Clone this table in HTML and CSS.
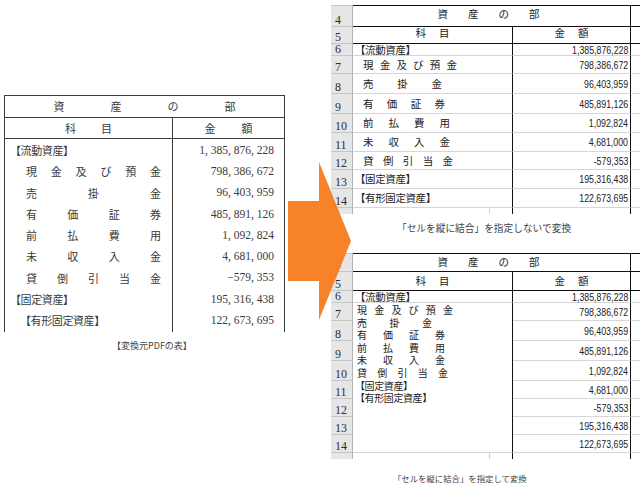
FILE: index.html
```html
<!DOCTYPE html>
<html lang="ja">
<head>
<meta charset="utf-8">
<title>セルを縦に結合</title>
<link rel="stylesheet" href="styles.css">
</head>
<body>
<main class="page">
  <section class="pdf">
    <div class="pdf-table">
      <div class="pdf-title"><span>資</span><span>産</span><span>の</span><span>部</span></div>
      <div class="pdf-head">
        <div class="pdf-hl"><span>科</span><span>目</span></div>
        <div class="pdf-hr"><span>金</span><span>額</span></div>
      </div>
      <div class="pdf-body">
        <div class="pdf-labels">
          <div class="pdf-l"><span class="br">【流動資産】</span></div>
          <div class="pdf-l pdf-l-sp"><span class="spread"><span>現</span><span>金</span><span>及</span><span>び</span><span>預</span><span>金</span></span></div>
          <div class="pdf-l pdf-l-sp"><span class="spread"><span>売</span><span>掛</span><span>金</span></span></div>
          <div class="pdf-l pdf-l-sp"><span class="spread"><span>有</span><span>価</span><span>証</span><span>券</span></span></div>
          <div class="pdf-l pdf-l-sp"><span class="spread"><span>前</span><span>払</span><span>費</span><span>用</span></span></div>
          <div class="pdf-l pdf-l-sp"><span class="spread"><span>未</span><span>収</span><span>入</span><span>金</span></span></div>
          <div class="pdf-l pdf-l-sp"><span class="spread"><span>貸</span><span>倒</span><span>引</span><span>当</span><span>金</span></span></div>
          <div class="pdf-l"><span class="br">【固定資産】</span></div>
          <div class="pdf-l pdf-l-sub"><span class="br">【有形固定資産】</span></div>
        </div>
        <div class="pdf-amounts">
          <div class="pdf-r">1, 385, 876, 228</div>
          <div class="pdf-r">798, 386, 672</div>
          <div class="pdf-r">96, 403, 959</div>
          <div class="pdf-r">485, 891, 126</div>
          <div class="pdf-r">1, 092, 824</div>
          <div class="pdf-r">4, 681, 000</div>
          <div class="pdf-r">−579, 353</div>
          <div class="pdf-r">195, 316, 438</div>
          <div class="pdf-r">122, 673, 695</div>
        </div>
      </div>
    </div>
    <p class="pdf-caption">【変換元PDFの表】</p>
  </section>

  <section class="shots">
    <div class="sheet sheet-split">
      <div class="rh rh-first">4</div>
      <div class="c-title c-up4"><span>資</span><span>産</span><span>の</span><span>部</span></div>
      <div class="c-pad c-pad-top"></div>

      <div class="rh">5</div>
      <div class="c-head c-up3"><span>科</span><span>目</span></div>
      <div class="c-head c-head-r c-up3"><span>金</span><span>額</span></div>
      <div class="c-pad c-pad-head"></div>

      <div class="rh">6</div>
      <div class="c-label"><span class="br">【流動資産】</span></div>
      <div class="c-num"><span class="n">1,385,876,228</span></div>
      <div class="c-pad"></div>

      <div class="rh">7</div>
      <div class="c-label c-label-sp"><span class="spread w94"><span>現</span><span>金</span><span>及</span><span>び</span><span>預</span><span>金</span></span></div>
      <div class="c-num"><span class="n">798,386,672</span></div>
      <div class="c-pad"></div>

      <div class="rh">8</div>
      <div class="c-label c-label-sp"><span class="spread w79"><span>売</span><span>掛</span><span>金</span></span></div>
      <div class="c-num"><span class="n">96,403,959</span></div>
      <div class="c-pad"></div>

      <div class="rh">9</div>
      <div class="c-label c-label-sp"><span class="spread w82"><span>有</span><span>価</span><span>証</span><span>券</span></span></div>
      <div class="c-num"><span class="n">485,891,126</span></div>
      <div class="c-pad"></div>

      <div class="rh">10</div>
      <div class="c-label c-label-sp"><span class="spread w87"><span>前</span><span>払</span><span>費</span><span>用</span></span></div>
      <div class="c-num"><span class="n">1,092,824</span></div>
      <div class="c-pad"></div>

      <div class="rh">11</div>
      <div class="c-label c-label-sp"><span class="spread w87"><span>未</span><span>収</span><span>入</span><span>金</span></span></div>
      <div class="c-num"><span class="n">4,681,000</span></div>
      <div class="c-pad"></div>

      <div class="rh">12</div>
      <div class="c-label c-label-sp"><span class="spread w90"><span>貸</span><span>倒</span><span>引</span><span>当</span><span>金</span></span></div>
      <div class="c-num"><span class="n">-579,353</span></div>
      <div class="c-pad"></div>

      <div class="rh">13</div>
      <div class="c-label"><span class="br">【固定資産】</span></div>
      <div class="c-num"><span class="n">195,316,438</span></div>
      <div class="c-pad"></div>

      <div class="rh">14</div>
      <div class="c-label"><span class="br">【有形固定資産】</span></div>
      <div class="c-num"><span class="n">122,673,695</span></div>
      <div class="c-pad"></div>

      <div class="rh rh-tail"></div>
      <div class="c-tail"><span class="tick"></span></div>
      <div class="c-tail-num"></div>
      <div class="c-pad c-pad-tail"></div>
    </div>
    <p class="cap cap-a">「セルを縦に結合」を指定しないで変換</p>

    <div class="sheet sheet-merged">
      <div class="rh rh-first">4</div>
      <div class="c-title"><span>資</span><span>産</span><span>の</span><span>部</span></div>
      <div class="c-pad c-pad-top"></div>

      <div class="rh">5</div>
      <div class="c-head"><span>科</span><span>目</span></div>
      <div class="c-head c-head-r"><span>金</span><span>額</span></div>
      <div class="c-pad c-pad-head"></div>

      <div class="rh">6</div>
      <div class="c-label"><span class="br">【流動資産】</span></div>
      <div class="c-num"><span class="n">1,385,876,228</span></div>
      <div class="c-pad"></div>

      <div class="rh">7</div>
      <div class="c-merged">
        <span class="mline spread w96"><span>現</span><span>金</span><span>及</span><span>び</span><span>預</span><span>金</span></span>
        <span class="mline spread w75"><span>売</span><span>掛</span><span>金</span></span>
        <span class="mline spread w88"><span>有</span><span>価</span><span>証</span><span>券</span></span>
        <span class="mline spread w88"><span>前</span><span>払</span><span>費</span><span>用</span></span>
        <span class="mline spread w88"><span>未</span><span>収</span><span>入</span><span>金</span></span>
        <span class="mline spread w91"><span>貸</span><span>倒</span><span>引</span><span>当</span><span>金</span></span>
        <span class="mline br">【固定資産】</span>
        <span class="mline br">【有形固定資産】</span>
      </div>
      <div class="c-num"><span class="n">798,386,672</span></div>
      <div class="c-pad"></div>

      <div class="rh">8</div>
      <div class="c-num"><span class="n">96,403,959</span></div>
      <div class="c-pad"></div>

      <div class="rh">9</div>
      <div class="c-num"><span class="n">485,891,126</span></div>
      <div class="c-pad"></div>

      <div class="rh">10</div>
      <div class="c-num"><span class="n">1,092,824</span></div>
      <div class="c-pad"></div>

      <div class="rh">11</div>
      <div class="c-num"><span class="n">4,681,000</span></div>
      <div class="c-pad"></div>

      <div class="rh">12</div>
      <div class="c-num"><span class="n">-579,353</span></div>
      <div class="c-pad"></div>

      <div class="rh">13</div>
      <div class="c-num"><span class="n">195,316,438</span></div>
      <div class="c-pad"></div>

      <div class="rh">14</div>
      <div class="c-num"><span class="n">122,673,695</span></div>
      <div class="c-pad"></div>

      <div class="rh rh-tail"></div>
      <div class="c-tail"><span class="tick"></span></div>
      <div class="c-tail-num"></div>
      <div class="c-pad c-pad-tail"></div>
    </div>
    <p class="cap cap-b">「セルを縦に結合」を指定して変換</p>
  </section>

  <svg class="arrow" width="64" height="159" viewBox="0 0 64 159" aria-hidden="true">
    <polygon points="0,39 31,39 31,0 63,79 31,158 31,119 0,119" fill="#f8822a"/>
  </svg>
</main>
</body>
</html>
```

FILE: styles.css
```css
* {
  box-sizing: border-box;
  margin: 0;
  padding: 0;
}

html,
body {
  background: #ffffff;
}

body {
  width: 640px;
  height: 492px;
  overflow: hidden;
  font-family: "Noto Sans CJK JP", "Noto Sans", sans-serif;
  color: #222;
}

.page {
  position: relative;
  display: flex;
  width: 640px;
  height: 492px;
}

/* ---------- left: source PDF table ---------- */
.pdf {
  width: 331px;
  flex: none;
  padding: 95px 0 0 4px;
}

.pdf-table {
  width: 281px;
  border: 1px solid #3c3c3c;
  border-bottom: 0;
  color: #3a3a3a;
  font-size: 11px;
}

.pdf-title {
  height: 22px;
  border-bottom: 1px solid #3c3c3c;
  display: flex;
  justify-content: center;
  align-items: center;
  gap: 46px;
  line-height: 1;
}

.pdf-head {
  height: 21px;
  border-bottom: 1px solid #3c3c3c;
  display: flex;
  line-height: 1;
}

.pdf-hl {
  width: 167px;
  display: flex;
  justify-content: center;
  align-items: center;
  gap: 25px;
}

.pdf-hr {
  flex: 1;
  border-left: 1px solid #3c3c3c;
  display: flex;
  justify-content: center;
  align-items: center;
  gap: 26px;
}

.pdf-body {
  display: flex;
  height: 193px;
}

.pdf-labels {
  width: 167px;
  padding-top: 1px;
}

.pdf-amounts {
  flex: 1;
  border-left: 1px solid #3c3c3c;
  padding-top: 1px;
}

.pdf-l {
  height: 21.25px;
  display: flex;
  align-items: center;
  padding-left: 5px;
  line-height: 1;
}

.pdf-l-sp {
  padding-left: 21px;
}

.pdf-l-sp .spread {
  width: 135px;
}

.pdf-l-sub {
  padding-left: 15px;
}

.pdf-r {
  height: 21.25px;
  display: flex;
  align-items: center;
  justify-content: flex-end;
  padding-right: 10px;
  font-family: "Liberation Serif", serif;
  font-size: 11.5px;
  color: #3a3a3a;
  line-height: 1;
}

.pdf-caption {
  margin-top: 9px;
  padding-left: 108px;
  font-size: 9px;
  line-height: 10px;
  color: #444;
  white-space: nowrap;
}

.br {
  letter-spacing: -0.4px;
  white-space: nowrap;
}

.spread {
  display: flex;
  justify-content: space-between;
}

/* ---------- right: Excel screenshots ---------- */
.shots {
  width: 309px;
  flex: none;
  padding-top: 5px;
}

.sheet {
  display: grid;
  grid-template-columns: 22px 160px 118px 9px;
  background: #fff;
  font-size: 10.5px;
  color: #222;
  line-height: 1;
}

.sheet-split {
  grid-template-rows: 22px 17px 12px 18px 20px 20px 19px 19px 18px 19px 19px 6px;
}

.sheet-merged {
  grid-template-rows: 19px 19px 12px 18px 20px 20px 20px 18px 18px 18px 18px 6px;
}

.rh {
  grid-column: 1;
  background: #e6e6e6;
  border-right: 1px solid #b4b4b4;
  border-bottom: 1px solid #c6c6c6;
  font-family: "Liberation Serif", serif;
  font-size: 12px;
  line-height: 10px;
  color: #2e2e2e;
  padding-left: 4px;
  padding-bottom: 1px;
  display: flex;
  align-items: flex-end;
}

.rh-first {
  border-top: 1px solid #c6c6c6;
}

.rh-tail {
  border-bottom: 0;
}

.c-title {
  grid-column: 2 / span 2;
  border-top: 1px solid #111;
  border-bottom: 1px solid #111;
  border-right: 1px solid #111;
  display: flex;
  justify-content: center;
  align-items: center;
  gap: 20px;
  padding-right: 6px;
}

.c-head {
  grid-column: 2;
  border-bottom: 1px solid #111;
  border-right: 1px solid #111;
  display: flex;
  justify-content: center;
  align-items: center;
  gap: 13px;
}

.c-head-r {
  grid-column: 3;
}

.c-up4 {
  padding-bottom: 4px;
}

.c-up3 {
  padding-bottom: 3px;
}

.c-pad {
  grid-column: 4;
  border-bottom: 1px solid #d6d6d6;
}

.c-pad-top {
  border-top: 1px solid #111;
  border-bottom-color: #111;
}

.c-pad-head {
  border-bottom-color: #111;
}

.c-pad-tail {
  border-bottom: 0;
}

.c-label {
  grid-column: 2;
  border-right: 1px solid #111;
  border-bottom: 1px solid #d6d6d6;
  display: flex;
  align-items: center;
  padding-left: 2px;
  padding-top: 1px;
}

.c-label-sp {
  padding-left: 10px;
}

.c-merged {
  grid-column: 2;
  grid-row: span 8;
  border-right: 1px solid #111;
  border-bottom: 1px solid #d6d6d6;
  padding: 1px 0 0 4px;
  display: flex;
  flex-direction: column;
  align-items: flex-start;
}

.mline {
  height: 12.6px;
  line-height: 12.6px;
  font-size: 10px;
}

.c-merged .br {
  margin-left: -2px;
}

.w75 { width: 75px; }
.w79 { width: 79px; }
.w82 { width: 82px; }
.w87 { width: 87px; }
.w88 { width: 88px; }
.w90 { width: 90px; }
.w91 { width: 91px; }
.w94 { width: 94px; }
.w96 { width: 96px; }

.c-num {
  grid-column: 3;
  border-right: 1px solid #111;
  border-bottom: 1px solid #d6d6d6;
  display: flex;
  align-items: center;
  justify-content: flex-end;
  padding-right: 2px;
  padding-top: 1px;
  font-family: "Liberation Sans", "Arial", sans-serif;
  font-size: 11px;
  color: #222;
}

.n {
  display: inline-block;
  transform: scaleX(0.8);
  transform-origin: right center;
  white-space: nowrap;
}

.c-tail {
  grid-column: 2;
  border-right: 1px solid #111;
  display: flex;
}

.tick {
  display: block;
  width: 1px;
  height: 100%;
  margin-left: 136px;
  background: #d0d0d0;
}

.c-tail-num {
  grid-column: 3;
  border-right: 1px solid #111;
}

.cap {
  font-size: 9.7px;
  line-height: 12px;
  color: #444;
  white-space: nowrap;
}

.cap-a {
  height: 39px;
  padding: 8px 0 0 66px;
}

.cap-b {
  padding: 13px 0 0 62px;
  font-size: 8.4px;
}

/* ---------- overlay arrow ---------- */
.arrow {
  position: absolute;
  left: 288px;
  top: 162px;
  display: block;
}
```
